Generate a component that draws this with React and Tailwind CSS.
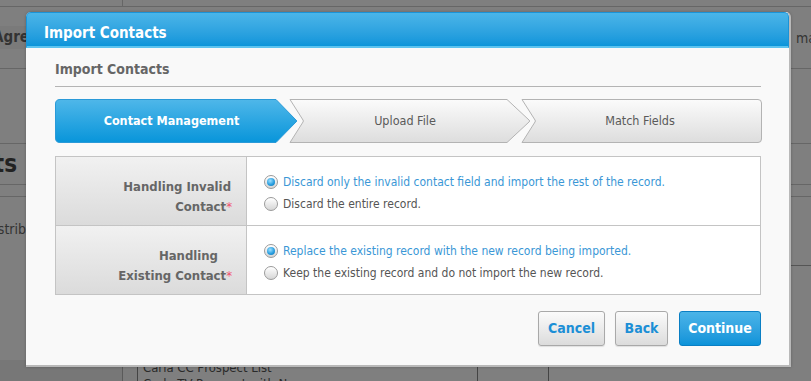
import React from "react";

const F = { fontFamily: '"DejaVu Sans Condensed", "DejaVu Sans", sans-serif' };

function Radio({ checked }) {
  return (
    <span className="relative inline-flex h-[14px] w-[14px] shrink-0 items-center justify-center rounded-full border border-[#9a9a9a] bg-gradient-to-b from-[#ffffff] to-[#d6d6d6] shadow-[inset_0_1px_0_#fff]">
      {checked && (
        <span className="h-[8px] w-[8px] rounded-full bg-[radial-gradient(circle_at_40%_35%,#9fe0ff_0%,#2a9fe0_55%,#0b6fb0_100%)]" />
      )}
    </span>
  );
}

function Option({ checked, children }) {
  return (
    <label className="flex items-center gap-[5px] h-[22px]">
      <Radio checked={checked} />
      <span className={checked ? "text-[#3a97d6]" : "text-[#555]"}>{children}</span>
    </label>
  );
}

function Step({ children, width, ml, path, active, textOffset }) {
  const id = active ? "gA" : "gI";
  return (
    <div className="relative h-[44px] shrink-0 flex items-center justify-center" style={{ width, marginLeft: ml }}>
      <svg className="absolute inset-0" width={width} height="44" viewBox={`0 0 ${width} 44`}>
        <defs>
          <linearGradient id="gA" x1="0" y1="0" x2="0" y2="1">
            <stop offset="0" stopColor="#4fb7e9" />
            <stop offset="1" stopColor="#0895da" />
          </linearGradient>
          <linearGradient id="gI" x1="0" y1="0" x2="0" y2="1">
            <stop offset="0" stopColor="#fbfbfb" />
            <stop offset="1" stopColor="#dddddd" />
          </linearGradient>
        </defs>
        <path d={path} fill={`url(#${id})`} stroke={active ? "#2a9ad8" : "#b3b3b3"} strokeWidth="1" strokeLinejoin="round" />
      </svg>
      <span
        className={`relative text-[12.5px] ${active ? "font-bold text-white" : "text-[#5a5a5a]"}`}
        style={{ marginLeft: textOffset }}
      >
        {children}
      </span>
    </div>
  );
}

export default function App() {
  return (
    <div className="relative h-[381px] w-[811px] overflow-hidden bg-[#7f7f7f]" style={F}>
      {/* dimmed page behind */}
      <div className="flex flex-col text-[#2e2e2e]">
        <div className="h-[7px] border-b border-[#666] flex">
          <div className="w-[123px] border-r border-[#666]" />
        </div>
        <div className="h-[62px] border-b border-[#666] flex items-center">
          <div className="w-[30px] overflow-hidden bg-[#7a7a7a] flex justify-end">
            <span className="whitespace-nowrap text-[15px] font-bold text-[#333] pr-[1px]">Agre</span>
          </div>
          <div className="flex-1" />
          <div className="w-[15px] overflow-hidden">
            <span className="whitespace-nowrap text-[14px] text-[#333]">manage</span>
          </div>
        </div>
        <div className="h-[75px] border-b border-[#666]" />
        <div className="h-[41px] border-b border-[#666] flex items-center">
          <div className="w-[17px] overflow-hidden flex justify-end">
            <span className="whitespace-nowrap text-[24px] font-bold text-[#222]">ts</span>
          </div>
        </div>
        <div className="h-[12px] border-b border-[#666]" />
        <div className="h-[69px] flex items-start pt-[22px]">
          <div className="w-[26px] overflow-hidden flex justify-end">
            <span className="whitespace-nowrap text-[14px] text-[#333]">Distrib</span>
          </div>
          <div className="ml-auto mt-[46px] w-[21px] border-b border-[#555]" />
        </div>
        <div className="h-[94px]" />
        <div className="flex h-[40px]">
          <div className="w-[123px] bg-[#777] border-r border-[#5a5a5a]" />
          <div className="w-[15px] bg-[#7c7c7c] border-r border-[#444]" />
          <div className="w-[340px] border-r border-[#444] pl-[5px] text-[13px] text-[#2a2a2a] leading-[16px]">
            <div>Carla CC Prospect List</div>
            <div>Carla TV Prospect with Names</div>
          </div>
          <div className="w-[71px] border-r border-[#444]" />
        </div>
      </div>

      {/* modal */}
      <div className="absolute left-[26px] top-[12px] w-[765px] h-[355px] flex flex-col rounded-t-[5px] bg-[#f9f9f9] border-r-2 border-b-2 border-[#b9b9b9] shadow-[0_0_3px_rgba(0,0,0,0.25)]">
        <div className="h-[36px] shrink-0 flex items-center rounded-t-[5px] border border-[#1b93d6] border-b-[2px] border-b-[#5cc3ef] bg-gradient-to-b from-[#4ab5e8] to-[#0a95da] pl-[17px] pt-[7px]">
          <span className="text-white font-bold text-[15px]">Import Contacts</span>
        </div>
        <div className="flex flex-col px-[29px] pr-[28px]">
          <div className="h-[39px] flex items-center border-b border-[#b4b4b4] text-[14px] font-bold text-[#666] pt-[5px]">
            Import Contacts
          </div>
          <div className="mt-[12px] flex">
            <Step
              width={243}
              ml={0}
              active
              textOffset={-10}
              path="M5,0.5 H221 L241,21 Q242.5,22 241,23 L221,43.5 H5 Q0.5,43.5 0.5,39 V5 Q0.5,0.5 5,0.5 Z"
            >
              Contact Management
            </Step>
            <Step
              width={244}
              ml={-10}
              textOffset={-10}
              path="M2,0.5 H219 L241,21 Q242.5,22 241,23 L219,43.5 H2 L15,23 Q15.8,22 15,21 Z"
            >
              Upload File
            </Step>
            <Step
              width={244}
              ml={-14}
              textOffset={0}
              path="M4,0.5 H240 Q243.5,0.5 243.5,4 V40 Q243.5,43.5 240,43.5 H4 L17,23 Q17.8,22 17,21 Z"
            >
              Match Fields
            </Step>
          </div>
          <div className="mt-[13px] border border-[#c4c4c4] bg-white">
            <div className="flex h-[69px] border-b border-[#c4c4c4]">
              <div className="w-[191px] shrink-0 border-r border-[#c4c4c4] bg-gradient-to-b from-[#f1f1f1] to-[#dbdbdb] flex flex-col items-end justify-center pr-[14px] text-[13px] font-bold text-[#666] leading-[20px]">
                <div className="pt-[12px] pr-[1px]">Handling Invalid</div>
                <div>Contact<span className="text-[#f0506e] font-normal">*</span></div>
              </div>
              <div className="flex flex-col justify-center pl-[17px] text-[12px] pt-[3px]">
                <Option checked>Discard only the invalid contact field and import the rest of the record.</Option>
                <Option>Discard the entire record.</Option>
              </div>
            </div>
            <div className="flex h-[68px]">
              <div className="w-[191px] shrink-0 border-r border-[#c4c4c4] bg-gradient-to-b from-[#f1f1f1] to-[#dbdbdb] flex flex-col items-end justify-center pr-[14px] text-[13px] font-bold text-[#666] leading-[20px]">
                <div className="pt-[12px] pr-[14px]">Handling</div>
                <div>Existing Contact<span className="text-[#f0506e] font-normal">*</span></div>
              </div>
              <div className="flex flex-col justify-center pl-[17px] text-[12px] pt-[3px]">
                <Option checked>Replace the existing record with the new record being imported.</Option>
                <Option>Keep the existing record and do not import the new record.</Option>
              </div>
            </div>
          </div>
          <div className="mt-[16px] flex justify-end gap-[10px] text-[14px] font-bold">
            <button className="h-[35px] w-[67px] rounded-[3px] border border-[#a9a9a9] bg-gradient-to-b from-[#fbfbfb] to-[#dcdcdc] text-[#1c8fd6] shadow-[0_1px_1px_rgba(0,0,0,0.1)]">
              Cancel
            </button>
            <button className="h-[35px] w-[53px] rounded-[3px] border border-[#a9a9a9] bg-gradient-to-b from-[#fbfbfb] to-[#dcdcdc] text-[#1c8fd6] shadow-[0_1px_1px_rgba(0,0,0,0.1)]">
              Back
            </button>
            <button className="h-[35px] w-[82px] rounded-[3px] border border-[#0a7fc4] bg-gradient-to-b from-[#4ab4e8] to-[#0a93d9] text-white ml-[1px]">
              Continue
            </button>
          </div>
        </div>
      </div>
    </div>
  );
}
